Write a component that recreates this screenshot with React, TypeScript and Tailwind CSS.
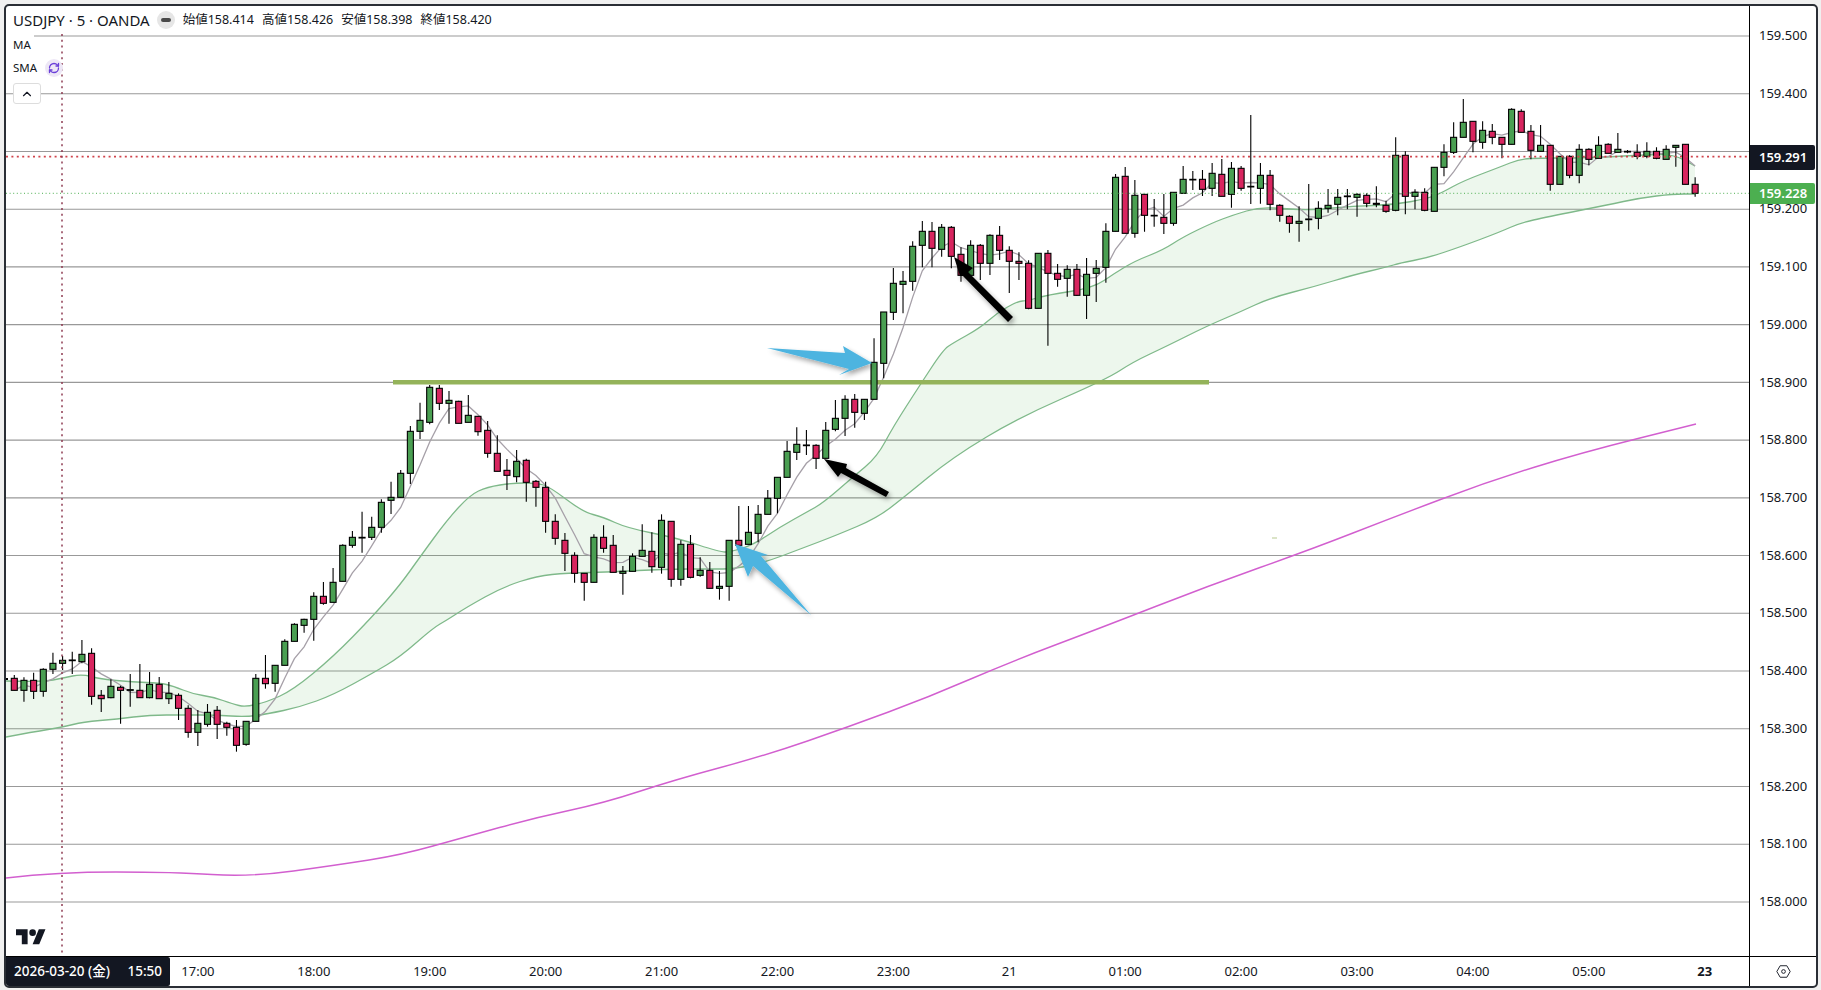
import { ChevronUp, RefreshCw } from 'lucide-react';

type Row = [number, number, number, number, 'g' | 'r'];
type Bar = { x: number; high: number; top: number; bottom: number; low: number; up: boolean };

// one block per traced region: y0 is the top of the region, values are in 1/3 px
const block = (y0: number, rows: Row[]) =>
  rows.map(([high, top, bottom, low, c]) => ({
    high: y0 + high / 3,
    top: y0 + top / 3,
    bottom: y0 + bottom / 3,
    low: y0 + low / 3,
    up: c === 'g',
  }));

const rawBars = [
  ...block(620, [
    [165, 175, 211, 211, 'r'], [172, 181, 211, 245, 'g'], [158, 181, 214, 237, 'r'], [145, 148, 214, 230, 'g'],
    [98, 130, 148, 162, 'g'], [108, 121, 130, 150, 'g'], [95, 120, 122, 162, 'g'], [60, 103, 125, 130, 'g'],
    [85, 100, 229, 254, 'r'], [210, 226, 236, 276, 'r'], [178, 199, 233, 235, 'g'], [197, 202, 211, 311, 'r'],
    [162, 209, 211, 260, 'g'], [132, 211, 233, 233, 'r'], [156, 193, 233, 235, 'g'], [171, 193, 236, 236, 'r'],
    [186, 220, 236, 252, 'g'], [220, 226, 265, 300, 'r'], [256, 265, 337, 353, 'r'], [270, 310, 337, 378, 'g'],
    [252, 277, 313, 320, 'g'], [258, 271, 313, 357, 'r'], [305, 310, 322, 347, 'r'], [300, 322, 376, 395, 'r'],
    [304, 304, 373, 377, 'g'], [162, 175, 304, 304, 'g'], [105, 175, 191, 206, 'r'],
  ]),
  ...block(520, [
    [436, 436, 490, 515, 'g'], [358, 364, 436, 436, 'g'], [310, 313, 364, 364, 'g'], [296, 298, 316, 338, 'g'],
    [217, 229, 298, 362, 'g'], [186, 229, 250, 254, 'r'], [144, 187, 247, 247, 'g'], [73, 76, 184, 184, 'g'],
    [33, 52, 76, 83, 'g'], [-25, 52, 54, 98, 'g'], [-10, 22, 52, 60, 'g'],
  ]),
  ...block(370, [
    [388, 397, 472, 488, 'g'], [335, 382, 391, 432, 'g'], [300, 310, 382, 384, 'g'], [168, 184, 310, 342, 'g'],
    [98, 151, 184, 207, 'g'], [45, 52, 157, 163, 'g'], [45, 55, 100, 120, 'r'], [63, 91, 100, 161, 'g'],
    [92, 94, 160, 160, 'r'], [75, 136, 157, 157, 'g'], [138, 139, 185, 197, 'r'], [153, 181, 250, 263, 'r'],
    [196, 250, 304, 304, 'r'], [267, 301, 316, 360, 'r'], [240, 274, 320, 337, 'g'], [266, 271, 337, 395, 'r'],
    [330, 334, 352, 410, 'r'], [335, 352, 454, 488, 'r'], [433, 454, 505, 524, 'r'], [489, 511, 550, 603, 'r'],
    [547, 556, 610, 638, 'r'], [610, 610, 637, 692, 'r'], [493, 502, 637, 637, 'g'], [466, 502, 535, 548, 'r'],
    [495, 526, 607, 607, 'r'], [588, 604, 610, 674, 'g'], [550, 559, 604, 604, 'g'], [463, 541, 559, 559, 'g'],
    [487, 544, 590, 608, 'r'], [433, 451, 592, 611, 'g'], [454, 454, 628, 650, 'r'], [511, 523, 628, 647, 'g'],
    [495, 523, 622, 625, 'r'], [562, 601, 616, 620, 'g'], [576, 601, 655, 655, 'r'], [603, 649, 655, 689, 'g'],
    [511, 511, 649, 692, 'g'], [408, 511, 526, 526, 'r'], [408, 487, 523, 523, 'g'], [405, 433, 490, 517, 'g'],
    [360, 385, 433, 433, 'g'], [322, 322, 385, 430, 'g'], [213, 244, 322, 322, 'g'], [172, 223, 247, 270, 'g'],
  ]),
  ...block(330, [
    [300, 345, 347, 375, 'g'], [343, 346, 385, 417, 'r'], [276, 301, 385, 385, 'g'], [210, 265, 298, 304, 'g'],
    [196, 208, 265, 318, 'g'], [192, 208, 247, 293, 'r'], [207, 208, 250, 270, 'g'], [25, 97, 208, 208, 'g'],
    [-54, -54, 100, 145, 'g'],
  ]),
  ...block(200, [
    [204, 250, 337, 360, 'g'], [213, 244, 253, 340, 'g'], [124, 139, 244, 272, 'g'], [63, 94, 136, 202, 'g'],
    [66, 94, 145, 202, 'r'], [72, 82, 148, 170, 'g'], [78, 82, 169, 205, 'r'], [142, 163, 226, 245, 'r'],
    [121, 136, 226, 226, 'g'], [132, 136, 190, 240, 'r'], [103, 106, 190, 225, 'g'], [78, 106, 151, 180, 'r'],
    [139, 151, 184, 279, 'r'], [157, 184, 190, 240, 'r'], [181, 190, 325, 328, 'r'], [160, 160, 325, 325, 'g'],
    [150, 160, 220, 437, 'r'], [192, 220, 238, 260, 'r'], [196, 208, 235, 290, 'g'], [192, 208, 286, 288, 'r'],
    [174, 223, 286, 357, 'g'], [180, 205, 220, 306, 'g'], [70, 94, 202, 248, 'g'],
  ]),
  ...block(110, [
    [192, 202, 364, 364, 'g'], [171, 199, 370, 370, 'r'], [210, 256, 370, 383, 'g'], [252, 253, 316, 365, 'r'],
    [267, 316, 317, 350, 'g'], [252, 322, 340, 372, 'r'], [247, 247, 340, 347, 'g'], [168, 208, 250, 250, 'g'],
    [183, 208, 209, 240, 'g'], [180, 208, 238, 258, 'r'], [159, 190, 235, 258, 'g'], [147, 193, 259, 259, 'r'],
    [156, 175, 253, 293, 'g'], [168, 175, 235, 242, 'r'], [15, 229, 230, 282, 'g'],
  ]),
  ...block(90, [
    [219, 256, 295, 341, 'g'], [240, 256, 343, 361, 'r'], [343, 346, 376, 395, 'r'], [376, 379, 400, 428, 'r'],
    [349, 394, 400, 455, 'g'], [282, 387, 389, 422, 'g'], [334, 355, 385, 418, 'g'], [297, 346, 355, 368, 'g'],
    [297, 322, 343, 376, 'g'], [297, 318, 320, 358, 'g'], [310, 313, 322, 380, 'g'], [310, 316, 340, 352, 'r'],
    [289, 340, 343, 352, 'g'], [332, 346, 364, 368, 'r'], [142, 196, 361, 364, 'g'], [184, 196, 319, 373, 'r'],
    [298, 307, 319, 358, 'g'], [295, 307, 361, 364, 'r'], [231, 232, 364, 364, 'g'], [163, 187, 232, 259, 'g'],
    [97, 142, 187, 192, 'g'], [27, 97, 142, 142, 'g'], [94, 94, 154, 187, 'r'], [94, 121, 157, 176, 'g'],
    [102, 124, 142, 163, 'r'], [142, 142, 163, 205, 'r'], [55, 58, 163, 163, 'g'], [58, 64, 127, 127, 'r'],
    [105, 124, 181, 208, 'r'], [105, 166, 184, 184, 'g'], [166, 166, 283, 302, 'r'], [199, 199, 283, 283, 'g'],
    [196, 199, 256, 265, 'r'], [163, 178, 256, 280, 'g'], [175, 178, 208, 226, 'r'], [139, 166, 205, 205, 'g'],
    [160, 163, 190, 190, 'r'], [129, 178, 187, 187, 'g'], [180, 184, 186, 190, 'g'], [163, 187, 199, 208, 'r'],
    [157, 184, 199, 205, 'g'], [172, 184, 205, 208, 'r'], [166, 178, 208, 208, 'g'], [165, 166, 172, 230, 'g'],
    [163, 163, 283, 283, 'r'], [262, 283, 310, 320, 'r'],
  ]),
];

const bars: Bar[] = rawBars.map((b, i) => ({ ...b, x: 14.3 + 9.66 * i }));

// SMA 5 of the closes
const smaFast = bars
  .map((_, i) => {
    const from = Math.max(0, i - 4);
    const slice = bars.slice(from, i + 1);
    const avg = slice.reduce((s, b) => s + (b.up ? b.top : b.bottom), 0) / slice.length;
    return `${bars[i].x.toFixed(1)},${avg.toFixed(1)}`;
  })
  .join(' ');

type Pt = [number, number];

const upper: Pt[] = [
  [6, 681], [43, 682], [63, 678], [82, 674], [100, 679], [133, 682], [160, 683], [173, 686], [193, 694], [213, 697],
  [233, 704], [245, 707], [267, 702], [293, 690], [333, 657], [373, 616], [400, 585], [420, 557], [447, 520],
  [470, 495], [487, 487], [513, 483], [537, 483], [550, 487], [583, 512], [603, 517], [627, 528], [677, 538],
  [720, 552], [730, 552], [753, 545], [780, 527], [807, 512], [823, 503], [853, 477], [877, 457], [893, 427],
  [920, 385], [943, 350], [953, 343], [980, 328], [997, 313], [1018, 301], [1027, 301], [1047, 295], [1093, 288],
  [1115, 273], [1135, 261], [1163, 250], [1183, 237], [1212, 223], [1233, 215], [1260, 207], [1287, 209],
  [1313, 210], [1353, 206], [1393, 205], [1430, 198], [1443, 192], [1463, 181], [1500, 167], [1520, 159],
  [1540, 158], [1573, 158], [1607, 157], [1640, 155], [1673, 154], [1695, 166],
];

const lower: Pt[] = [
  [6, 737], [33, 732], [63, 727], [83, 722], [117, 719], [150, 715], [183, 715], [217, 715], [245, 717], [267, 714],
  [300, 707], [333, 695], [373, 673], [400, 657], [433, 628], [447, 620], [467, 607], [503, 587], [537, 576],
  [567, 573], [613, 572], [663, 569], [713, 569], [733, 569], [763, 563], [803, 548], [837, 535], [877, 518],
  [903, 498], [953, 457], [1020, 417], [1107, 379], [1133, 362], [1167, 346], [1207, 326], [1240, 312], [1270, 298],
  [1313, 287], [1353, 275], [1387, 267], [1400, 263], [1427, 258], [1460, 247], [1500, 232], [1520, 223], [1547, 217],
  [1607, 205], [1640, 198], [1673, 194], [1695, 194],
];

const slow: Pt[] = [
  [6, 878], [58, 872], [174, 872], [250, 877], [337, 865], [401, 855], [465, 837], [534, 818], [604, 803], [674, 780],
  [767, 755], [848, 727], [929, 697], [1010, 662], [1103, 627], [1208, 586], [1312, 549], [1394, 517], [1487, 482],
  [1580, 453], [1696, 424],
];

// rounds the corners of a traced line: quadratic curves through the segment midpoints
const smooth = (list: Pt[], start = 'M') => {
  let d = `${start}${list[0][0]} ${list[0][1]}`;
  for (let i = 1; i < list.length - 1; i++) {
    const mx = (list[i][0] + list[i + 1][0]) / 2;
    const my = (list[i][1] + list[i + 1][1]) / 2;
    d += ` Q${list[i][0]} ${list[i][1]} ${mx} ${my}`;
  }
  const last = list[list.length - 1];
  return `${d} L${last[0]} ${last[1]}`;
};

const prices = ['159.500', '159.400', '159.300', '159.200', '159.100', '159.000', '158.900', '158.800', '158.700', '158.600', '158.500', '158.400', '158.300', '158.200', '158.100', '158.000'];
const gridYs = prices.map((_, i) => 36 + i * 57.73);
const times = ['17:00', '18:00', '19:00', '20:00', '21:00', '22:00', '23:00', '21', '01:00', '02:00', '03:00', '04:00', '05:00'];

function Chart() {
  return (
    <svg viewBox="6 6 1743 950" className="block h-[950px] w-[1743px]">
      <defs>
        <filter id="arrow-shadow" x="-20%" y="-20%" width="140%" height="140%">
          <feGaussianBlur in="SourceAlpha" stdDeviation="2.5" />
          <feOffset dx="2" dy="3" />
          <feComponentTransfer>
            <feFuncA type="linear" slope="0.35" />
          </feComponentTransfer>
          <feMerge>
            <feMergeNode />
            <feMergeNode in="SourceGraphic" />
          </feMerge>
        </filter>
      </defs>

      {/* Grid */}
      {gridYs.map((y) => (
        <line key={y} x1="6" x2="1749" y1={y} y2={y} stroke="#999999" strokeWidth="1.1" />
      ))}

      {/* Band between the two averages */}
      <path d={`${smooth(upper)} ${smooth([...lower].reverse(), 'L')} Z`} fill="#4caf50" fillOpacity="0.1" />
      <path d={smooth(upper)} fill="none" stroke="#7fb98a" strokeWidth="1.3" />
      <path d={smooth(lower)} fill="none" stroke="#7fb98a" strokeWidth="1.3" />
      <path d={smooth(slow)} fill="none" stroke="#d25fcf" strokeWidth="1.4" />
      <polyline points={smaFast} fill="none" stroke="#a6a0a8" strokeWidth="1.3" />

      {/* Level line */}
      <rect x="393" y="380" width="816" height="4.5" fill="#94b35a" />
      <rect x="1272" y="537.5" width="5" height="1" fill="#b7c98f" />

      {/* Candles */}
      <line x1="4.7" x2="4.7" y1="676" y2="682" stroke="#000" strokeWidth="1.1" />
      <rect x="5" y="678" width="3" height="2" fill="#000" />
      {bars.map((b) => (
        <g key={b.x}>
          <line x1={b.x} x2={b.x} y1={b.high} y2={b.low} stroke="#000" strokeWidth="1.1" />
          <rect
            x={b.x - 3}
            y={b.top}
            width="6"
            height={Math.max(b.bottom - b.top, 0.6)}
            fill={b.up ? '#4a9f52' : '#d8255f'}
            stroke="#000"
            strokeWidth="1.1"
          />
        </g>
      ))}

      {/* Price lines and crosshair */}
      <line x1="6" x2="1749" y1="156.7" y2="156.7" stroke="#d0444c" strokeWidth="1.8" strokeDasharray="2 3.4" />
      <line x1="6" x2="1749" y1="193.3" y2="193.3" stroke="#4caf50" strokeWidth="1" strokeDasharray="1 2.6" />
      <line x1="62" x2="62" y1="34" y2="956" stroke="#8e3b52" strokeWidth="1.5" strokeDasharray="2 3.8" />

      {/* Hand drawn arrows */}
      <g filter="url(#arrow-shadow)">
        <polygon points="767,348 845,353 843,346 872,363 839,375 849,369" fill="#4db4e0" />
        <polygon points="735,544 768,555 761,556 811,615 753,566 748,577" fill="#4db4e0" />
        <polygon points="824,459 847,464 846,468 889,492 886,497 841,473 838,477" fill="#000" />
        <polygon points="954,257 973,268 968,272 1013,317 1008,322 963,276 960,276" fill="#000" />
      </g>

      {/* Logo */}
      <g transform="translate(16 926) scale(0.83)">
        <path d="M14 22H7V11H0V4h14v18zM28 22h-8l7.5-18h8L28 22z" fill="#131722" />
        <circle cx="20" cy="8" r="4" fill="#131722" />
      </g>
    </svg>
  );
}

function Legend() {
  return (
    <div className="absolute left-0 top-0 flex flex-col items-start text-[#131722]">
      <div className="flex h-[28px] items-center pl-[7px]">
        <span className="text-[15px]">USDJPY · 5 · OANDA</span>
        <span className="ml-[7px] flex h-[18px] w-[18px] items-center justify-center rounded-full bg-[#e6e6e6]">
          <span className="h-[4px] w-[10px] rounded-full bg-[#4a4a4a]" />
        </span>
        <div className="ml-[8px] flex gap-[8px] text-[12.5px]">
          <span>始値158.414</span>
          <span>高値158.426</span>
          <span>安値158.398</span>
          <span>終値158.420</span>
        </div>
      </div>
      <div className="flex h-[22px] w-[28px] items-center bg-white pl-[7px] text-[11.5px]">MA</div>
      <div className="flex h-[24px] items-center pl-[7px] text-[11.5px]">
        <span>SMA</span>
        <span className="ml-[8px] flex h-[18px] w-[18px] items-center justify-center rounded-full bg-[#ede7f6]">
          <RefreshCw size={12} strokeWidth={2.6} className="text-[#6a3fd8]" />
        </span>
      </div>
      <button className="ml-[7px] mt-[3px] flex h-[21px] w-[28px] items-center justify-center rounded-[3px] border border-[#dddddd] bg-white">
        <ChevronUp size={14} strokeWidth={2} />
      </button>
    </div>
  );
}

function PriceAxis() {
  return (
    <div className="relative w-[66px] pt-[1.13px] text-[13px] text-[#131722]">
      {prices.map((p) => (
        <div key={p} className="flex h-[57.73px] items-center pl-[9px]">
          {/* 159.300 sits under the last price tag */}
          {p === '159.300' ? null : p}
        </div>
      ))}
      <div className="absolute left-0 top-[139px] flex h-[25px] w-[65px] items-center rounded-r-[2px] bg-[#131722] pl-[9px] font-semibold text-white">
        159.291
      </div>
      <div className="absolute left-0 top-[177px] flex h-[21px] w-[65px] items-center rounded-r-[2px] bg-[#4caf50] pl-[9px] font-semibold text-white">
        159.228
      </div>
    </div>
  );
}

function TimeAxis() {
  return (
    <div className="flex h-[30px] border-t border-black text-[13px] text-[#131722]">
      <div className="relative flex w-[1743px] items-center pl-[134px]">
        {times.map((t) => (
          <div key={t} className="w-[115.92px] shrink-0 text-center">
            {t}
          </div>
        ))}
        <div className="w-[115.92px] shrink-0 text-center font-bold">23</div>
        <div className="absolute bottom-0 left-0 top-0 flex w-[164px] items-center justify-between rounded-r-[2px] bg-[#131722] px-[8px] text-[13.5px] font-medium text-white">
          <span>2026-03-20 (金)</span>
          <span>15:50</span>
        </div>
      </div>
      <div className="flex w-[67px] items-center justify-center border-l border-black">
        <svg viewBox="0 0 16 14" className="h-[13px] w-[15px]" fill="none" stroke="#131722" strokeWidth="1">
          <path d="M0.8 7 4.4 0.8h7.2L15.2 7l-3.6 6.2H4.4z" />
          <circle cx="8" cy="7" r="2" />
        </svg>
      </div>
    </div>
  );
}

export default function App() {
  return (
    <div className="h-[990px] w-[1821px] overflow-hidden bg-[#f0f0f0] pl-[4px] pt-[4px] [font-family:'Noto_Sans','Noto_Sans_CJK_JP',sans-serif]">
      <div className="flex h-[984px] w-[1814px] flex-col overflow-hidden rounded-[5px] border-2 border-[#2a2e35] bg-white">
        <div className="flex h-[950px]">
          <div className="relative w-[1743px]">
            <Chart />
            <Legend />
          </div>
          <div className="w-px bg-black" />
          <PriceAxis />
        </div>
        <TimeAxis />
      </div>
    </div>
  );
}
